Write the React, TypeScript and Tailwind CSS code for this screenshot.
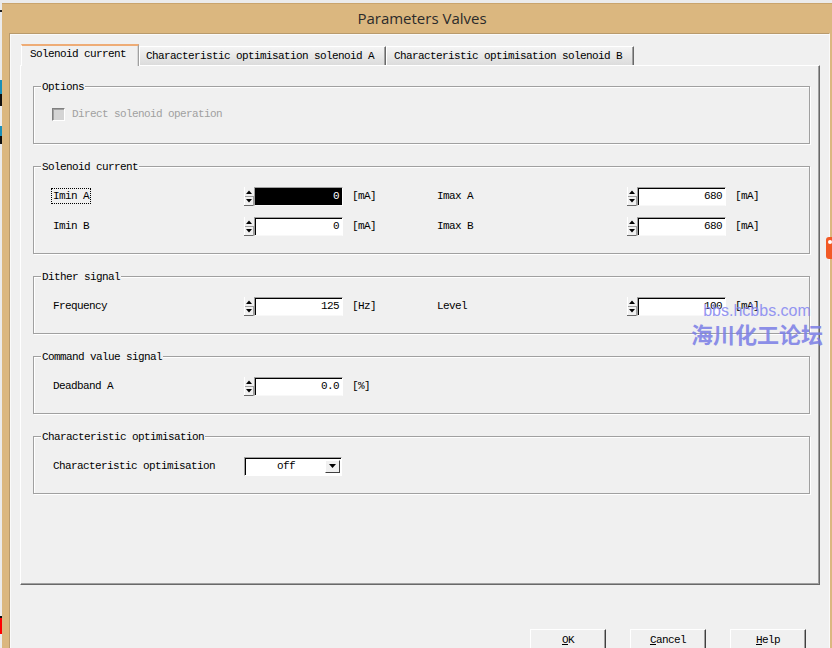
import React from "react";

const MONO = "font-['Liberation_Mono','DejaVu_Sans_Mono',monospace] text-[11px] tracking-[-0.6px]";

function Spin() {
  return (
    <svg width="10" height="19" viewBox="0 0 10 19" className="shrink-0">
      <rect x="0" y="0" width="10" height="19" fill="#f0f0f0" />
      <line x1="0.5" y1="0" x2="0.5" y2="19" stroke="#ffffff" />
      <path d="M2 7 L5 3.5 L8 7 Z" fill="#000" />
      <line x1="1" y1="9.5" x2="10" y2="9.5" stroke="#a0a0a0" />
      <path d="M2 12 L8 12 L5 15.5 Z" fill="#000" />
      <line x1="0" y1="18.5" x2="10" y2="18.5" stroke="#696969" />
      <line x1="9.5" y1="10" x2="9.5" y2="19" stroke="#a0a0a0" />
    </svg>
  );
}

function NumBox({ value, selected }: { value: string; selected?: boolean }) {
  return (
    <div className="flex h-[19px]">
      <Spin />
      <div
        className={`w-[89px] h-[19px] border border-t-[#a0a0a0] border-l-[#a0a0a0] border-r-white border-b-[#f8f8f8] shadow-[inset_1px_1px_0_#000] flex items-center justify-end pr-[3px] ${
          selected ? "bg-black text-white" : "bg-white text-black"
        }`}
      >
        {value}
      </div>
    </div>
  );
}

function Field({
  label,
  value,
  unit,
  focus,
  selected,
  labelW,
  unitW,
}: {
  label: string;
  value: string;
  unit: string;
  focus?: boolean;
  selected?: boolean;
  labelW: string;
  unitW?: string;
}) {
  return (
    <div className="flex items-center">
      <div className={`${labelW} shrink-0`}>
        <span className={focus ? "outline-1 outline-dotted outline-black px-[1px] py-[1px]" : "px-[1px]"}>
          {label}
        </span>
      </div>
      <NumBox value={value} selected={selected} />
      <div className={`${unitW ?? ""} pl-[9px] shrink-0`}>{unit}</div>
    </div>
  );
}

function Group({
  title,
  h,
  pt,
  children,
}: {
  title: string;
  h: string;
  pt: string;
  children?: React.ReactNode;
}) {
  return (
    <div
      className={`relative w-[777px] ${h} ${pt} border border-[#a0a0a0] shadow-[1px_1px_0_#ffffff,inset_1px_1px_0_#ffffff] pl-[18px] flex flex-col gap-[10px]`}
    >
      <span className="absolute left-[7px] top-[-7px] bg-[#f0f0f0] px-[1px] leading-[14px]">
        {title}
      </span>
      {children}
    </div>
  );
}

function Btn({ first, rest }: { first: string; rest: string }) {
  return (
    <div className="w-[76px] h-[23px] bg-[#f0f0f0] border border-t-white border-l-white border-r-[#404040] border-b-[#404040] shadow-[inset_-1px_-1px_0_#a0a0a0] flex items-center justify-center">
      <span>
        <span className="underline">{first}</span>
        {rest}
      </span>
    </div>
  );
}

export default function App() {
  return (
    <div className={`relative w-[832px] h-[648px] overflow-hidden bg-[#ebebeb] flex ${MONO} text-black`}>
      {/* desktop sliver */}
      <div className="w-[2px] shrink-0 flex flex-col">
        <div className="h-[10px]" />
        <div className="h-[2px] bg-[#202020]" />
        <div className="h-[68px]" />
        <div className="h-[14px] bg-[#1a8fb8]" />
        <div className="h-[12px] bg-[#101010]" />
        <div className="h-[20px]" />
        <div className="h-[10px] bg-[#1a8fb8]" />
        <div className="h-[8px] bg-[#101010]" />
        <div className="h-[472px]" />
        <div className="h-[2px] bg-[#101010]" />
        <div className="h-[16px] bg-[#ff0000]" />
      </div>

      {/* window */}
      <div className="flex-1 mt-[3px] bg-[#dbb77f] border-t border-[#c9a46d] flex flex-col">
        <div className="h-[29px] shrink-0 flex items-center justify-center pl-[10px] font-['Open_Sans','Noto_Sans',sans-serif] text-[15px] tracking-normal text-[#2b2b2b]">
          Parameters Valves
        </div>
        <div className="flex-1 flex pl-[7px] pr-[2px]">
          <div className="flex-1 bg-[#f0f0f0] border-t border-l border-[#b89a6c] shadow-[inset_1px_1px_0_#fafafa] border-r border-r-[#fafafa] flex flex-col pt-[10px] pl-[10px]">
            {/* tabs */}
            <div className="h-[21px] flex items-end ml-[1px] relative z-10">
              <div className="w-[118px] h-[22px] mb-[-1px] bg-[#f0f0f0] border-t-2 border-t-[#eeac76] border-l border-l-white border-r border-r-[#a0a0a0] shadow-[inset_-1px_0_0_#d8d8d8] pl-[8px] pt-[1px] leading-[14px]">
                Solenoid current
              </div>
              <div className="w-[247px] h-[19px] bg-linear-to-b from-[#f4f4f4] to-[#dcdcdc] border-t border-l border-white border-r border-r-[#696969] shadow-[inset_-1px_0_0_#a0a0a0] pl-[6px] flex items-center">
                Characteristic optimisation solenoid A
              </div>
              <div className="w-[248px] h-[19px] bg-linear-to-b from-[#f4f4f4] to-[#dcdcdc] border-t border-l border-white border-r border-r-[#696969] shadow-[inset_-1px_0_0_#a0a0a0] pl-[7px] flex items-center">
                Characteristic optimisation solenoid B
              </div>
            </div>

            {/* panel */}
            <div className="w-[800px] h-[520px] border-t border-l border-white border-r border-b border-r-[#696969] border-b-[#696969] shadow-[inset_-1px_-1px_0_#a0a0a0] pt-[20px] pl-[12px] flex flex-col gap-[22px]">
              <Group title="Options" h="h-[58px]" pt="pt-[17px]">
                <div className="h-[20px] flex items-center gap-[7px] text-[#a0a0a0]">
                  <div className="w-[13px] h-[13px] bg-[#d4d4d4] border border-t-[#808080] border-l-[#808080] border-r-white border-b-white shadow-[inset_1px_1px_0_#a0a0a0]" />
                  <span>Direct solenoid operation</span>
                </div>
              </Group>

              <Group title="Solenoid current" h="h-[88px]" pt="pt-[19px]">
                <div className="h-[20px] flex items-center">
                  <Field label="Imin A" value="0" unit="[mA]" focus selected labelW="w-[192px]" unitW="w-[93px]" />
                  <Field label="Imax A" value="680" unit="[mA]" labelW="w-[191px]" />
                </div>
                <div className="h-[20px] flex items-center">
                  <Field label="Imin B" value="0" unit="[mA]" labelW="w-[192px]" unitW="w-[93px]" />
                  <Field label="Imax B" value="680" unit="[mA]" labelW="w-[191px]" />
                </div>
              </Group>

              <Group title="Dither signal" h="h-[58px]" pt="pt-[19px]">
                <div className="h-[20px] flex items-center">
                  <Field label="Frequency" value="125" unit="[Hz]" labelW="w-[192px]" unitW="w-[93px]" />
                  <Field label="Level" value="100" unit="[mA]" labelW="w-[191px]" />
                </div>
              </Group>

              <Group title="Command value signal" h="h-[58px]" pt="pt-[19px]">
                <div className="h-[20px] flex items-center">
                  <Field label="Deadband A" value="0.0" unit="[%]" labelW="w-[192px]" />
                </div>
              </Group>

              <Group title="Characteristic optimisation" h="h-[58px]" pt="pt-[19px]">
                <div className="h-[20px] flex items-center">
                  <div className="w-[192px] shrink-0 px-[1px]">Characteristic optimisation</div>
                  <div className="w-[98px] h-[19px] bg-white border border-t-[#a0a0a0] border-l-[#a0a0a0] border-r-white border-b-white shadow-[inset_1px_1px_0_#000] flex items-center">
                    <span className="flex-1 text-center pl-[2px]">off</span>
                    <div className="w-[15px] h-[13px] mr-[1px] bg-[#f0f0f0] border border-t-white border-l-white border-r-[#404040] border-b-[#404040] flex items-center justify-center">
                      <svg width="7" height="4" viewBox="0 0 7 4">
                        <path d="M0 0 L7 0 L3.5 4 Z" fill="#000" />
                      </svg>
                    </div>
                  </div>
                </div>
              </Group>
            </div>

            {/* buttons */}
            <div className="mt-[44px] flex justify-end gap-[24px] pr-[23px]">
              <Btn first="O" rest="K" />
              <Btn first="C" rest="ancel" />
              <Btn first="H" rest="elp" />
            </div>
          </div>
        </div>
      </div>

      {/* watermark */}
      <div className="absolute left-[688px] top-[302px] w-[138px] flex flex-col items-center tracking-normal pointer-events-none">
        <span className="font-['Liberation_Sans',Arial,sans-serif] text-[16px] leading-[18px] text-[#8a8cf0] opacity-90">
          bbs.hcbbs.com
        </span>
        <span className="font-['Noto_Sans_CJK_SC',sans-serif] font-bold text-[22px] leading-[26px] text-[#7a7ee6] opacity-85">
          海川化工论坛
        </span>
      </div>

      {/* object at right edge */}
      <div className="absolute left-[826px] top-[237px] w-[8px] h-[22px] bg-[#f25a26] rounded-l-[3px] flex items-start pt-[3px] pl-[2px]">
        <div className="w-[4px] h-[4px] rounded-full bg-white" />
      </div>
    </div>
  );
}
